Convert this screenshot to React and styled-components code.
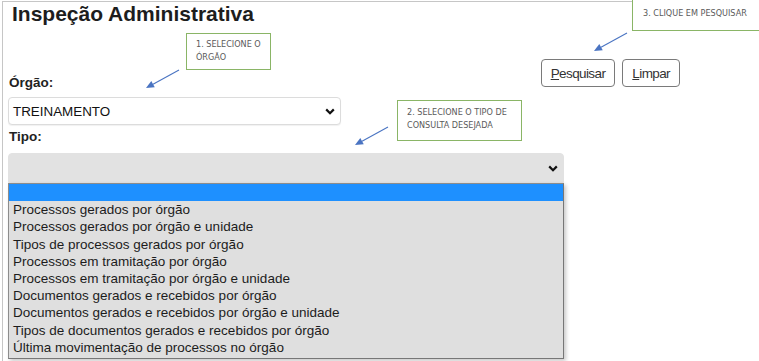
import React from "react";
import styled, { createGlobalStyle } from "styled-components";

const GlobalStyle = createGlobalStyle`
  html, body { margin: 0; padding: 0; background: #fff; }
  body { font-family: "Liberation Sans", Arial, sans-serif; color: #222; }
  * { box-sizing: border-box; }
`;

const Page = styled.div`
  position: relative;
  width: 759px;
  height: 361px;
  overflow: hidden;
  background: #fff;
`;

const Frame = styled.div`
  margin: 1px 0 0 2px;
  height: 360px;
  border-top: 1px solid #c6c6c6;
  border-left: 1px solid #c6c6c6;
  padding-left: 5px;
`;

const Title = styled.h1`
  margin: 0;
  padding-left: 4px;
  font-size: 21px;
  line-height: 24px;
  font-weight: bold;
  color: #1d1d1d;
`;

const TopRow = styled.div`
  display: flex;
  width: 672px;
  margin-top: 33px;
  align-items: flex-start;
  justify-content: space-between;
`;

const Field = styled.div`
  display: flex;
  flex-direction: column;
  width: ${(p) => p.$w}px;
  margin-top: ${(p) => p.$mt || 0}px;
`;

const Label = styled.label`
  font-size: 13.5px;
  line-height: 16px;
  font-weight: bold;
  color: #222;
  margin-bottom: ${(p) => p.$mb}px;
  padding-left: 1px;
`;

const SelectBox = styled.div`
  display: flex;
  align-items: center;
  justify-content: space-between;
  height: ${(p) => p.$h}px;
  padding: 0 5px 0 4px;
  font-size: 13.4px;
  color: #111;
  background: ${(p) => (p.$open ? "#e2e2e2" : "#fff")};
  border: 1px solid ${(p) => (p.$open ? "#e2e2e2" : "#dcdcdc")};
  border-radius: ${(p) => (p.$open ? "4px 4px 0 0" : "4px")};
  box-shadow: ${(p) => (p.$open ? "none" : "0 1px 1px rgba(0,0,0,0.06)")};
`;

const Buttons = styled.div`
  display: flex;
  gap: 7px;
`;

const Button = styled.button`
  height: 28px;
  padding: 0 9px;
  font-family: "Liberation Sans", Arial, sans-serif;
  font-size: 13.5px;
  letter-spacing: -0.6px;
  color: #333;
  background: #fff;
  border: 1px solid #7a7a7a;
  border-radius: 4px;
  u { text-decoration: underline; }
`;

const List = styled.ul`
  list-style: none;
  margin: 0;
  padding: 0 0 2px 0;
  width: 556px;
  background: #dfdfdf;
  border: 1px solid #8c8c8c;
  border-right-color: #777;
  border-bottom-color: #777;
  box-shadow: 2px 2px 4px rgba(0, 0, 0, 0.22);
`;

const Option = styled.li`
  height: 17.2px;
  line-height: 17px;
  padding-left: 4px;
  font-size: 13.5px;
  color: #1c1c1c;
  background: ${(p) => (p.$selected ? "#1e90ff" : "transparent")};
  white-space: nowrap;
`;

const Callout = styled.div`
  position: absolute;
  left: ${(p) => p.$x}px;
  top: ${(p) => p.$y}px;
  width: ${(p) => p.$w}px;
  height: ${(p) => p.$h}px;
  padding: ${(p) => p.$pt}px 0 0 ${(p) => p.$pl}px;
  background: #fff;
  border: 1px solid #8ab566;
  font-family: "Liberation Sans Narrow", "DejaVu Sans Condensed", "Liberation Sans", Arial, sans-serif;
  font-size: 9px;
  line-height: 13px;
  color: #5a5a5a;
  white-space: pre-line;
`;

const Overlay = styled.svg`
  position: absolute;
  left: 0;
  top: 0;
  pointer-events: none;
`;

const Chevron = () => (
  <svg width="10" height="7" viewBox="0 0 10 7">
    <path d="M1.2 1.4 L5 5.2 L8.8 1.4" fill="none" stroke="#111" strokeWidth="2.2" />
  </svg>
);

const Arrow = ({ from, to }) => {
  const [x1, y1] = from;
  const [x2, y2] = to;
  const dx = x2 - x1;
  const dy = y2 - y1;
  const len = Math.hypot(dx, dy);
  const ux = dx / len;
  const uy = dy / len;
  const hl = 8;
  const hw = 3.6;
  const bx = x2 - ux * hl;
  const by = y2 - uy * hl;
  const px = -uy;
  const py = ux;
  const pts = `${x2},${y2} ${bx + px * hw},${by + py * hw} ${bx - px * hw},${by - py * hw}`;
  return (
    <g>
      <line x1={x1} y1={y1} x2={bx} y2={by} stroke="#4a74c2" strokeWidth="1.1" />
      <polygon points={pts} fill="#4a74c2" />
    </g>
  );
};

const options = [
  "",
  "Processos gerados por órgão",
  "Processos gerados por órgão e unidade",
  "Tipos de processos gerados por órgão",
  "Processos em tramitação por órgão",
  "Processos em tramitação por órgão e unidade",
  "Documentos gerados e recebidos por órgão",
  "Documentos gerados e recebidos por órgão e unidade",
  "Tipos de documentos gerados e recebidos por órgão",
  "Última movimentação de processos no órgão",
];

export default function App() {
  return (
    <Page>
      <GlobalStyle />
      <Frame>
        <Title>Inspeção Administrativa</Title>
        <TopRow>
          <Field $w={333} $mt={16}>
            <Label $mb={6}>Órgão:</Label>
            <SelectBox $h={28}>
              <span>TREINAMENTO</span>
              <Chevron />
            </SelectBox>
          </Field>
          <Buttons>
            <Button>
              <u>P</u>esquisar
            </Button>
            <Button>
              <u>L</u>impar
            </Button>
          </Buttons>
        </TopRow>
        <Field $w={556} $mt={4}>
          <Label $mb={8}>Tipo:</Label>
          <SelectBox $h={30} $open>
            <span />
            <Chevron />
          </SelectBox>
          <List>
            {options.map((o, i) => (
              <Option key={i} $selected={i === 0}>
                {o}
              </Option>
            ))}
          </List>
        </Field>
      </Frame>

      <Callout $x={186} $y={33} $w={85} $h={37} $pt={4} $pl={9}>
        {"1. SELECIONE O\nÓRGÃO"}
      </Callout>
      <Callout $x={397} $y={100} $w={125} $h={41} $pt={5} $pl={9}>
        {"2. SELECIONE O TIPO DE\nCONSULTA DESEJADA"}
      </Callout>
      <Callout $x={632} $y={-8} $w={140} $h={39} $pt={14} $pl={10}>
        {"3. CLIQUE EM PESQUISAR"}
      </Callout>

      <Overlay width="759" height="361">
        <Arrow from={[179, 70]} to={[146, 88]} />
        <Arrow from={[388, 127]} to={[355, 145]} />
        <Arrow from={[627, 33]} to={[594, 51]} />
      </Overlay>
    </Page>
  );
}
